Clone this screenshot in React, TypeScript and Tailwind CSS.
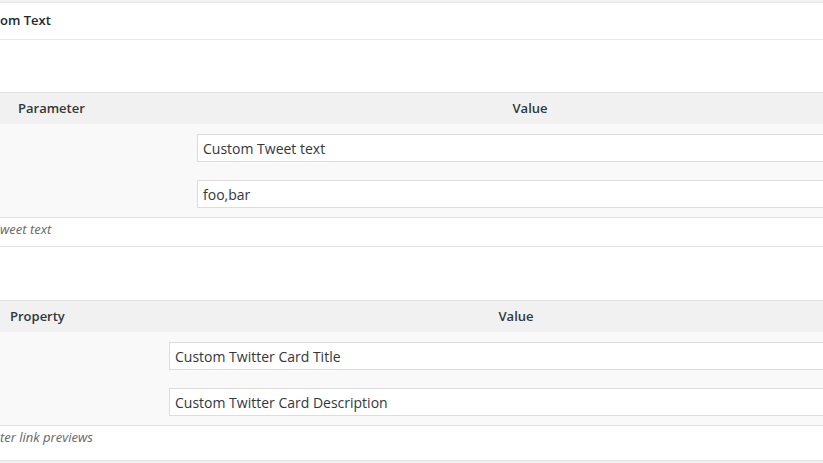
import React from "react";

const font = { fontFamily: '"Open Sans", "Noto Sans", sans-serif' };

function Input({ value }: { value: string }) {
  return (
    <div className="h-[28px] w-[900px] border border-[#dddddd] bg-white pl-[5px] flex items-center text-[14px] text-[#32373c]">
      {value}
    </div>
  );
}

function Table({
  label,
  labelPad,
  colW,
  values,
  desc,
  descH,
}: {
  label: string;
  labelPad: string;
  colW: string;
  values: string[];
  desc: string;
  descH: string;
}) {
  return (
    <div>
      <div className="border-t border-[#e1e1e1] bg-[#f1f1f1] h-[32px] flex items-center text-[13px] font-semibold text-[#32373c]">
        <div className={`${colW} ${labelPad} shrink-0`}>{label}</div>
        <div className="flex-1 text-center">Value</div>
      </div>
      <div className="bg-[#f9f9f9] border-b border-[#e1e1e1] flex">
        <div className={`${colW} shrink-0`} />
        <div className="flex-1 overflow-hidden pl-[10px] pt-[10px] pb-[9px] flex flex-col gap-[18px]">
          {values.map((v) => (
            <Input key={v} value={v} />
          ))}
        </div>
      </div>
      <div className={`${descH} bg-white border-b border-[#e1e1e1] pt-[2px] text-[13px] italic text-[#666666]`}>
        {desc}
      </div>
    </div>
  );
}

export default function App() {
  return (
    <div className="w-[823px] h-[463px] overflow-hidden bg-white" style={font}>
      <div className="w-[873px]">
        <div className="h-[2px] bg-[#f1f1f1]" />
        <div className="h-[38px] border-t border-b border-[#e8e8e8] flex items-center text-[13px] font-semibold text-[#23282d]">
          om Text
        </div>
        <div className="h-[52px]" />
        <Table
          label="Parameter"
          labelPad="pl-[18px]"
          colW="w-[187px]"
          values={["Custom Tweet text", "foo,bar"]}
          desc="weet text"
          descH="h-[29px]"
        />
        <div className="h-[53px]" />
        <Table
          label="Property"
          labelPad="pl-[10px]"
          colW="w-[159px]"
          values={["Custom Twitter Card Title", "Custom Twitter Card Description"]}
          desc="ter link previews"
          descH="h-[35px]"
        />
        <div className="h-[10px] bg-[#f1f1f1]" />
      </div>
    </div>
  );
}
